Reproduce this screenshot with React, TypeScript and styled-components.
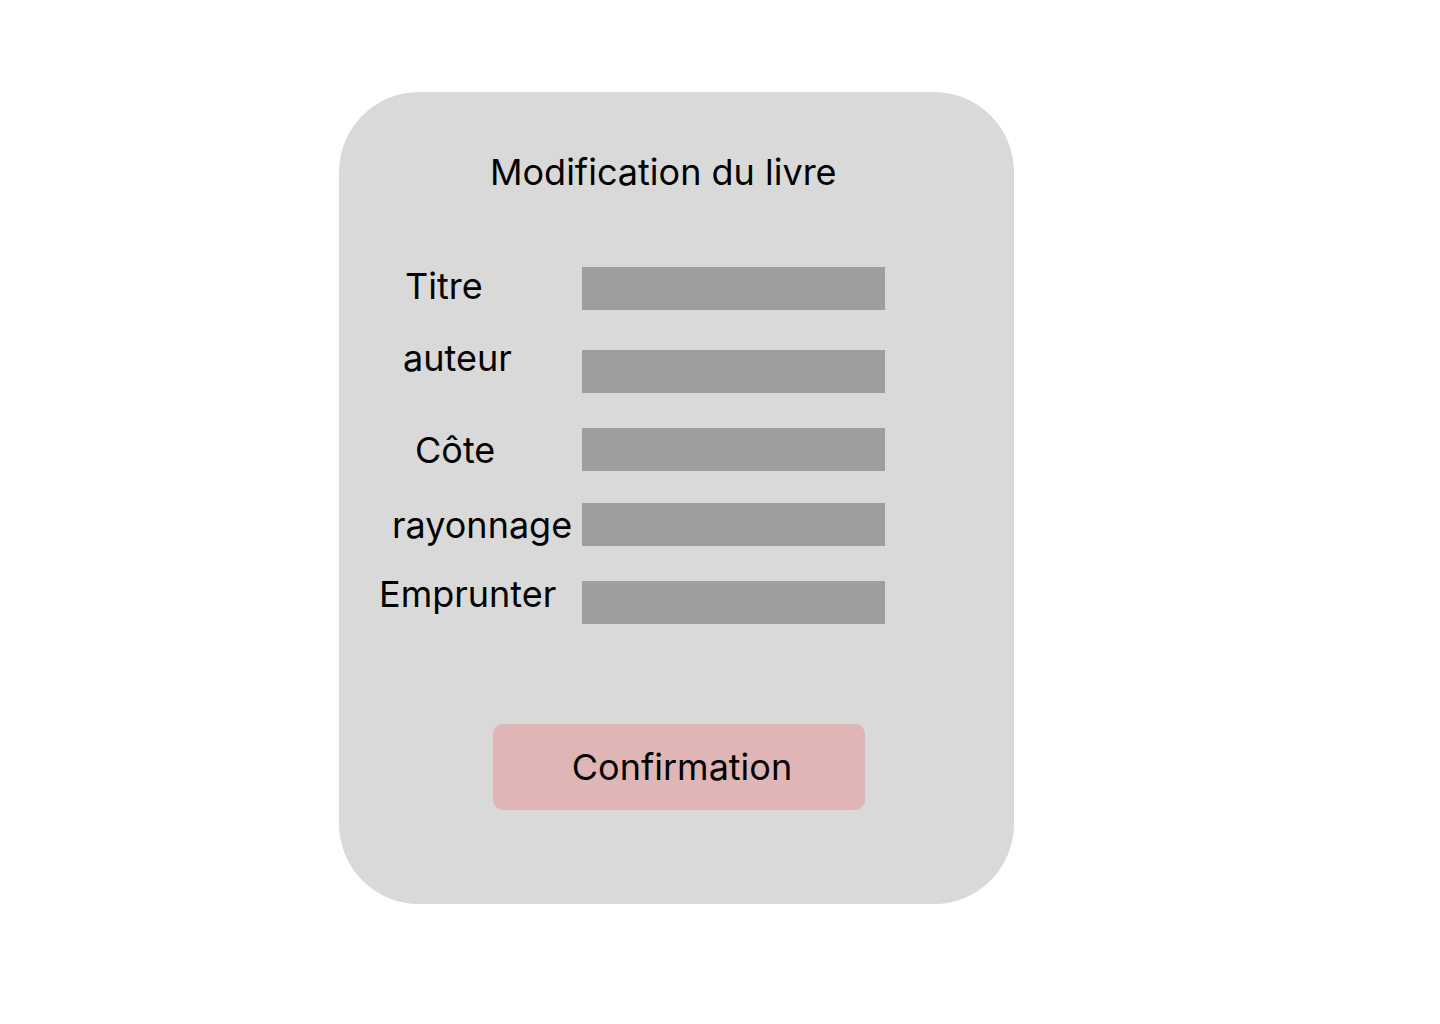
import React from "react";
import styled, { createGlobalStyle } from "styled-components";

const GlobalStyle = createGlobalStyle`
    html, body {
        margin: 0;
        padding: 0;
        background: #fff;
    }
    body {
        font-family: Inter, "Noto Sans", sans-serif;
        color: #000;
    }
`;

interface Field {
    label: string;
    x: number;   // label start, from card left
    dy: number;  // label shift against the field
    gap: number; // space above the row
}

const fields: Field[] = [
    { label: "Titre", x: 66, dy: -3, gap: 0 },
    { label: "auteur", x: 64, dy: -14, gap: 40 },
    { label: "Côte", x: 76, dy: 0, gap: 35 },
    { label: "rayonnage", x: 53, dy: 0, gap: 32 },
    { label: "Emprunter", x: 40, dy: -9, gap: 35 },
];

const App: React.FC = () => {
    return (
        <>
            <GlobalStyle />
            <PageStyle>
                <CardStyle>
                    <TitleStyle>Modification du livre</TitleStyle>

                    <FormStyle>
                        {fields.map((f) => (
                            <RowStyle key={f.label} $gap={f.gap}>
                                <LabelCell>
                                    <LabelStyle $x={f.x} $dy={f.dy}>{f.label}</LabelStyle>
                                </LabelCell>
                                <InputStyle type="text" aria-label={f.label} />
                            </RowStyle>
                        ))}
                    </FormStyle>

                    <ConfirmButton type="button">Confirmation</ConfirmButton>
                </CardStyle>
            </PageStyle>
        </>
    );
};

const PageStyle = styled.div`
    padding: 92px 0 0 339px;
    min-height: 1024px;
    box-sizing: border-box;
`;

const CardStyle = styled.div`
    width: 675px;
    height: 812px;
    box-sizing: border-box;
    background-color: #d9d9d9;
    border-radius: 80px;
    padding-top: 56px;
    display: flex;
    flex-direction: column;
    align-items: flex-start;
`;

const TitleStyle = styled.h1`
    margin: 0 0 0 151px;
    font-family: Inter, "Noto Sans", sans-serif;
    font-weight: 400;
    font-size: 36px;
    line-height: 48px;
    white-space: nowrap;
`;

const FormStyle = styled.div`
    margin-top: 71px;
    display: flex;
    flex-direction: column;
`;

const RowStyle = styled.div<{ $gap: number }>`
    display: flex;
    align-items: flex-start;
    height: 43px;
    margin-top: ${(p) => p.$gap}px;
`;

const LabelCell = styled.div`
    width: 243px;
    height: 43px;
`;

const LabelStyle = styled.label<{ $x: number; $dy: number }>`
    display: block;
    margin: ${(p) => p.$dy}px 0 0 ${(p) => p.$x}px;
    font-size: 36px;
    line-height: 44px;
    white-space: nowrap;
`;

const InputStyle = styled.input`
    width: 303px;
    height: 43px;
    box-sizing: border-box;
    border: none;
    outline: none;
    padding: 0 12px;
    background-color: #9e9e9f;
    font-family: Inter, sans-serif;
    font-size: 24px;
`;

const ConfirmButton = styled.button`
    margin: 100px 0 0 154px;
    width: 372px;
    height: 86px;
    border: none;
    border-radius: 10px;
    background-color: #e0b5b6;
    color: #000;
    font-family: Inter, "Noto Sans", sans-serif;
    font-size: 36px;
    line-height: 44px;
    padding: 0 0 0 6px;
    cursor: pointer;
`;

export default App;
